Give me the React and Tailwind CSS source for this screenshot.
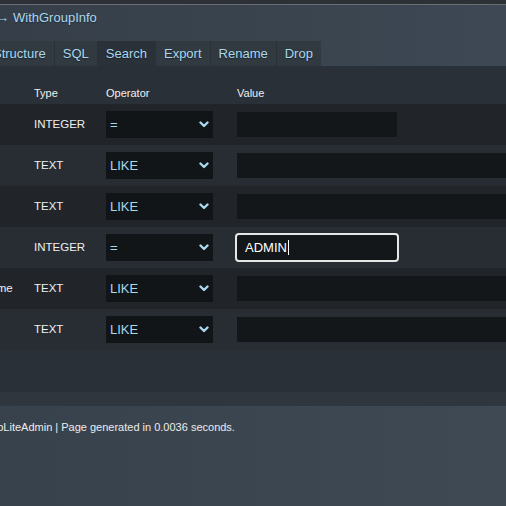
import React from 'react';

// Table search page (phpLiteAdmin-style dark theme), scrolled a little to the right

const tabs = ['Structure', 'SQL', 'Search', 'Export', 'Rename', 'Drop'];

const fields = [
  { name: 'id', type: 'INTEGER', op: '=', value: '' },
  { name: 'fn', type: 'TEXT', op: 'LIKE', value: '' },
  { name: 'ln', type: 'TEXT', op: 'LIKE', value: '' },
  { name: 'gid', type: 'INTEGER', op: '=', value: 'ADMIN', focused: true },
  { name: 'name', type: 'TEXT', op: 'LIKE', value: '' },
  { name: 'ds', type: 'TEXT', op: 'LIKE', value: '' },
];

const Chevron = () => (
  <svg width="10" height="7" viewBox="0 0 10 7" className="shrink-0">
    <polyline points="1.5,1.5 5,5 8.5,1.5" fill="none" stroke="#a8d8ee" strokeWidth="2.4" strokeLinecap="round" strokeLinejoin="round" />
  </svg>
);

const OperatorSelect = ({ op }) => (
  <div className="ml-[8px] flex h-[27px] w-[107px] items-center justify-between bg-[#121518] pl-[4px] pr-[4px] text-[13px] text-[#a8d8ee]">
    <span>{op}</span>
    <Chevron />
  </div>
);

const ValueInput = ({ type, value, focused }) => {
  if (focused) {
    return (
      <div className="ml-[6px] flex h-[29px] w-[164px] items-center rounded-[4px] border-2 border-[#e6e6e6] bg-[#14171a] pl-[8px] text-[13px] text-white">
        <span>{value}</span>
        <span className="ml-[1px] h-[15px] w-px bg-white" />
      </div>
    );
  }
  return <div className={`ml-[8px] h-[25px] bg-[#14171a] ${type === 'INTEGER' ? 'w-[160px]' : 'w-[320px]'}`} />;
};

export default function App() {
  return (
    <div className="h-[506px] w-[506px] overflow-hidden bg-[#3a4450] font-['Liberation_Sans',Arial,sans-serif]">
      <div className="-ml-[40px] w-[586px]">
        {/* top strip */}
        <div className="h-[4px] bg-[#2d3136]" />
        <div className="h-px bg-[#6b6f74]" />

        {/* breadcrumb header */}
        <div className="h-[36px] bg-gradient-to-r from-[#353e48] to-[#3e4955] pt-[5px] pl-[33px]">
          <div className="flex items-center text-[13px] leading-[16px] text-[#a8d8ee] [text-shadow:0_1px_1px_rgba(0,0,0,0.3)]">
            <span className="w-[16px] text-right">→</span>
            <span className="ml-[4px]">WithGroupInfo</span>
          </div>
        </div>

        {/* tabs */}
        <div className="flex h-[25px] bg-gradient-to-r from-[#353e48] to-[#3e4955] pl-[25px]">
          {tabs.map((t, i) => (
            <div
              key={t}
              className={`flex items-center px-[8px] text-[13px] text-[#a8d8ee] [text-shadow:0_1px_1px_rgba(0,0,0,0.35)] ${
                i > 0 ? 'border-l border-[#2a3037]' : ''
              } ${t === 'Search' ? 'bg-[#2a3138]' : 'bg-[#313941]'}`}
            >
              {t}
            </div>
          ))}
        </div>

        {/* search panel */}
        <div className="bg-[#2a3037] pb-[42px]">
          <div className="grid h-[38px] grid-cols-[66px_72px_131px_1fr] pt-[20px] text-[11px] leading-[14px] text-[#f0f0f0]">
            <div />
            <div className="pl-[8px]">Type</div>
            <div className="pl-[8px]">Operator</div>
            <div className="pl-[8px]">Value</div>
          </div>
          {fields.map((f, i) => (
            <div
              key={f.name}
              className={`grid h-[41px] grid-cols-[66px_72px_131px_1fr] items-center ${
                i % 2 === 0 ? 'bg-[#212529]' : 'bg-[#282d33]'
              }`}
            >
              <div className="pl-[24px] text-[11.5px] text-[#f0f0f0]">{f.name}</div>
              <div className="pl-[8px] text-[11.5px] text-[#f0f0f0]">{f.type}</div>
              <div>
                <OperatorSelect op={f.op} />
              </div>
              <div>
                <ValueInput type={f.type} value={f.value} focused={f.focused} />
              </div>
            </div>
          ))}
        </div>
        <div className="h-[14px] bg-[#2f363e]" />

        {/* footer */}
        <div className="bg-gradient-to-r from-[#37414b] to-[#3f4a55] pt-[14px] pb-[80px] pl-[25px] text-[11px] leading-[14px] text-[#ececec]">
          phpLiteAdmin | Page generated in 0.0036 seconds.
        </div>
      </div>
    </div>
  );
}
